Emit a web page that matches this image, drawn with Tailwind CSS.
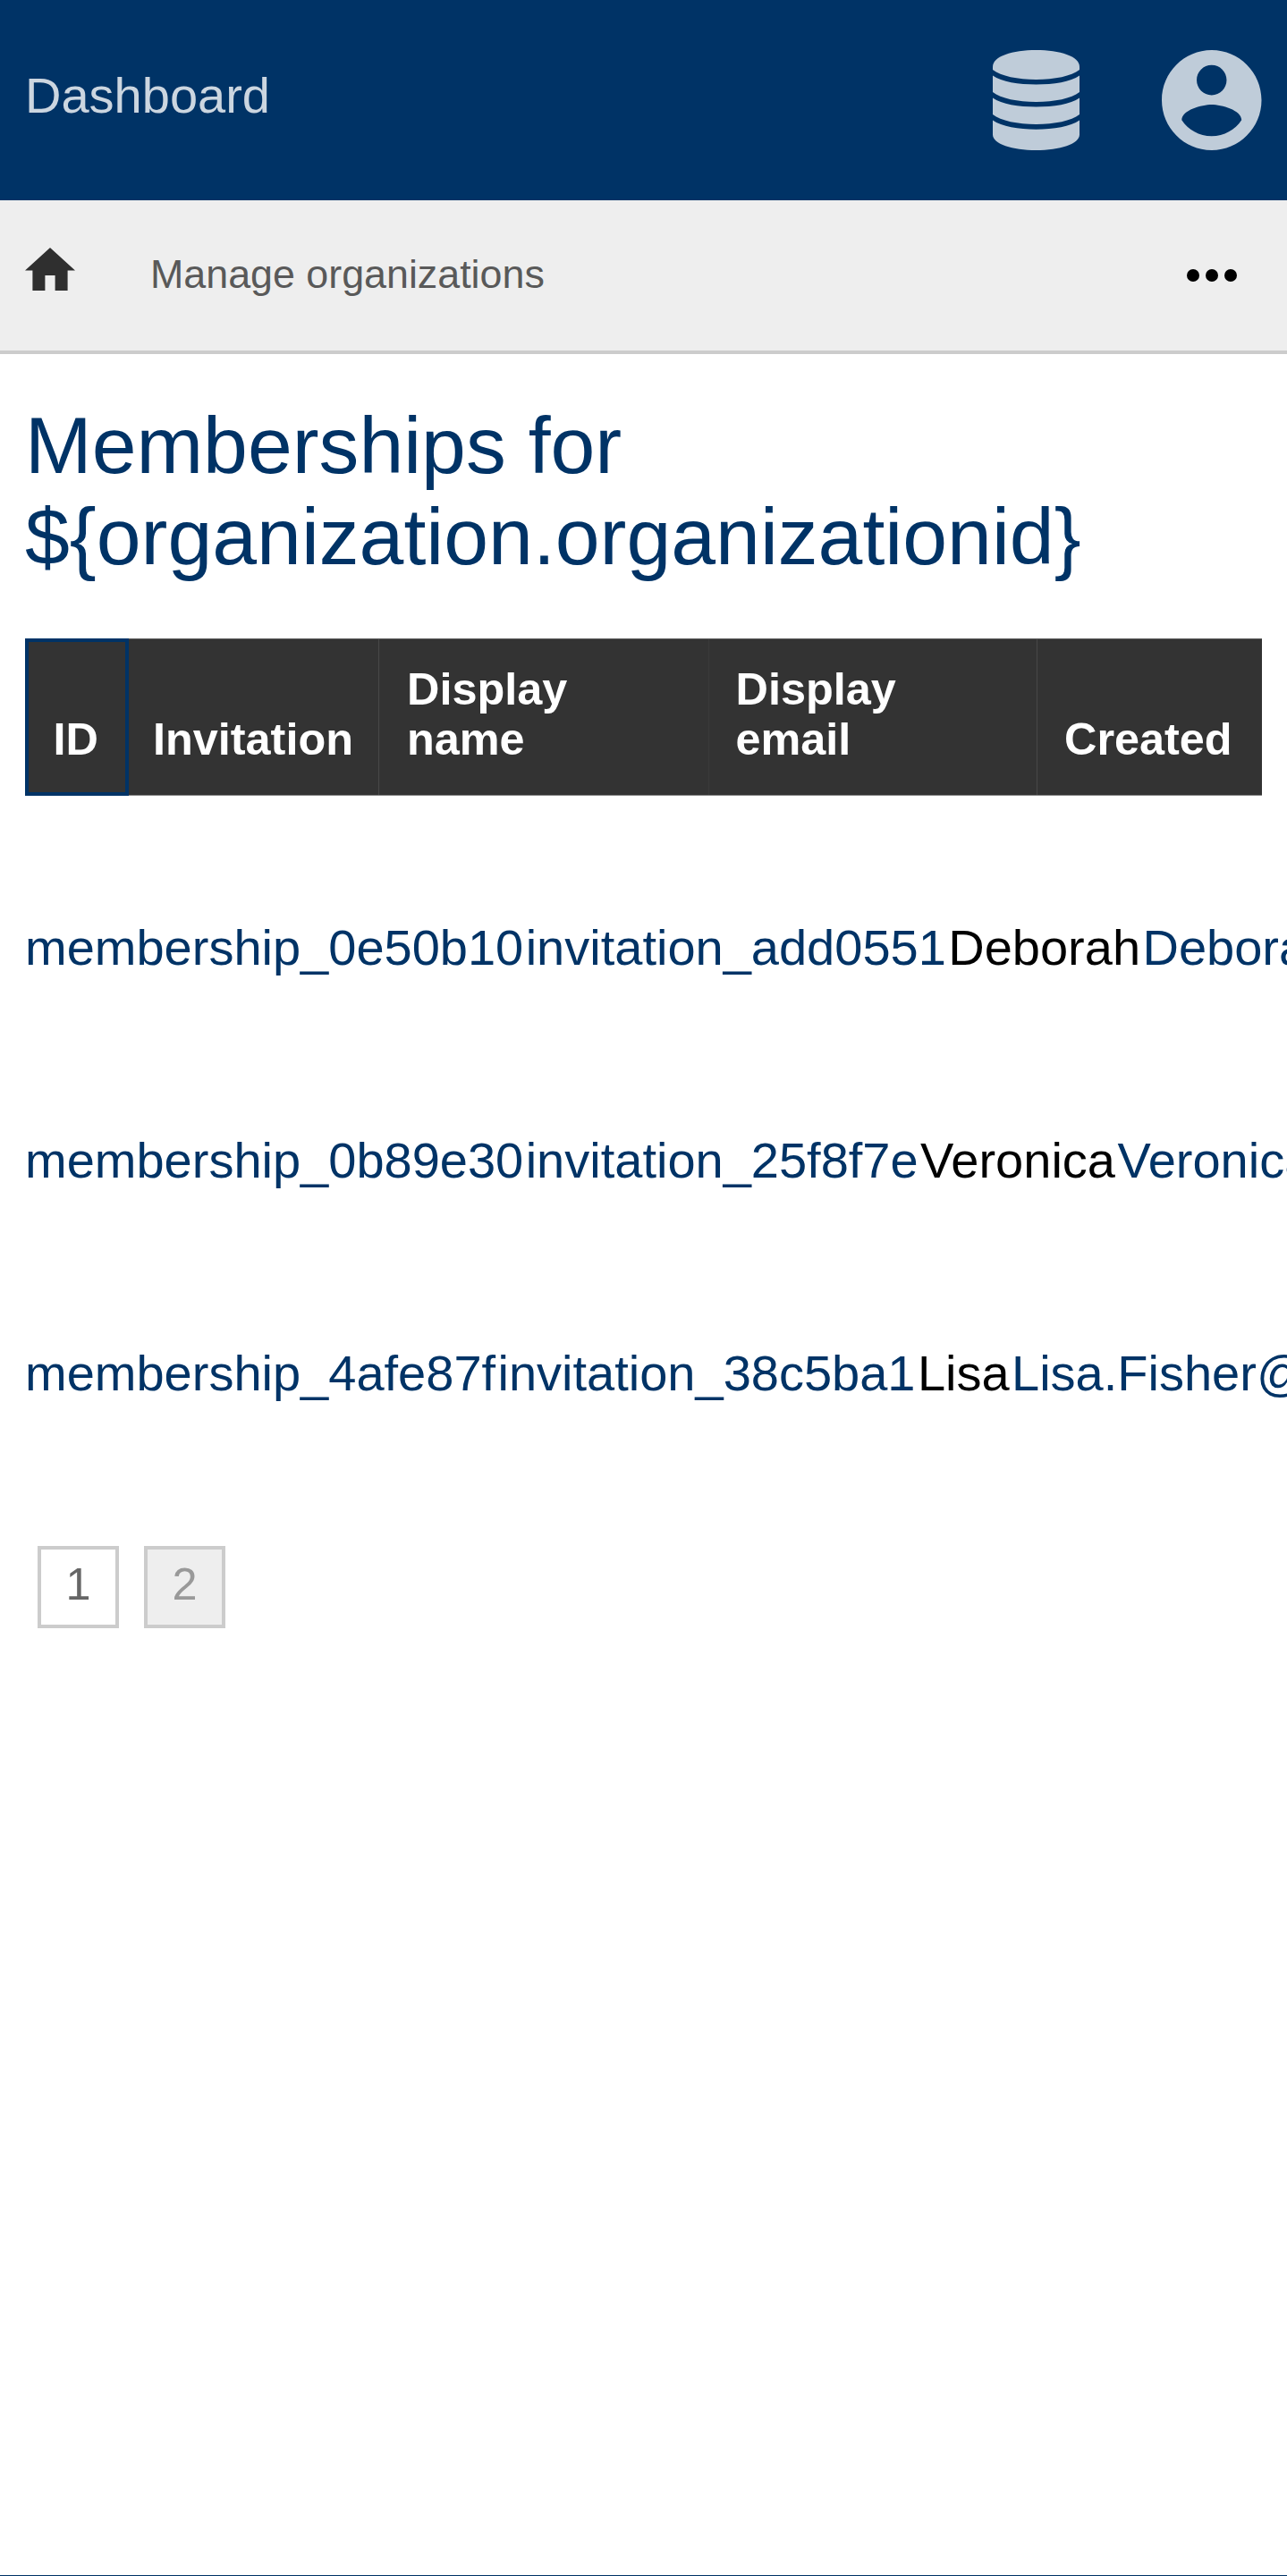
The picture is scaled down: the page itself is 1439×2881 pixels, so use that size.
<!DOCTYPE html>
<html lang="en">
<head>
<meta charset="utf-8">
<title>Memberships</title>
<script src="https://cdn.jsdelivr.net/npm/@tailwindcss/browser@4"></script>
</head>
<body class="flex h-[2881px] flex-col overflow-hidden bg-white font-['Liberation_Sans',Arial,sans-serif] text-[56px] text-black">
  <header class="flex h-56 shrink-0 items-center justify-between bg-[#003366] pr-[28.500px] pl-7">
    <a class="pb-[11px] leading-16 text-[#ccd6e0]">Dashboard</a>
    <div class="flex items-center gap-[92px] text-[#bfccd9]">
      <svg class="h-28 w-[97px]" viewBox="0 0 97 112" fill="currentColor">
        <path d="M0 18.500C0 7 22 0 48.500 0S97 7 97 18.500V22C88 29 69 33 48.500 33S9 29 0 22z"/>
        <path d="M0 28.500C10 35.500 29 38.500 48.500 38.500S87 35.500 97 28.500V47C88 54 69 58 48.500 58S9 54 0 47z"/>
        <path d="M0 53.500C10 60.500 29 63.500 48.500 63.500S87 60.500 97 53.500V72C88 79 69 83 48.500 83S9 79 0 72z"/>
        <path d="M0 78.500C10 85.500 29 88.700 48.500 88.700S87 85.500 97 78.500V94.500C97 105 75 112 48.500 112S0 105 0 94.500z"/>
      </svg>
      <svg class="h-28 w-[111.500px]" viewBox="2 2 20 20" preserveAspectRatio="none" fill="currentColor"><path d="M12 2C6.480 2 2 6.480 2 12s4.480 10 10 10 10-4.480 10-10S17.520 2 12 2zm0 3c1.660 0 3 1.340 3 3s-1.340 3-3 3-3-1.340-3-3 1.340-3 3-3zm0 14.200c-2.500 0-4.710-1.280-6-3.220.030-1.990 4-3.080 6-3.080 1.990 0 5.970 1.090 6 3.080-1.290 1.940-3.500 3.220-6 3.220z"/></svg>
    </div>
  </header>
  <nav class="flex h-[172px] shrink-0 items-center border-b-4 border-[#ccc] bg-[#eee] px-7">
    <svg class="mb-[14px] h-[48px] w-14" viewBox="2 3 20 17" preserveAspectRatio="none" fill="#2f2f2f"><path d="M10 20v-6h4v6h5v-8h3L12 3 2 12h3v8z"/></svg>
    <a class="ml-[84px] pb-[5px] text-[44.800px] leading-14 text-[#595959]">Manage organizations</a>
    <svg class="mr-7 ml-auto h-[14px] w-14" viewBox="0 0 56 14"><circle cx="7" cy="7" r="7"/><circle cx="28" cy="7" r="7"/><circle cx="49" cy="7" r="7"/></svg>
  </nav>
  <main class="flex grow flex-col overflow-hidden pt-[51px] pl-7">
    <h1 class="mb-[63px] text-[89.600px] leading-[102px] text-[#003366]">Memberships for<br>${organization.organizationid}</h1>
    <div class="grid h-44 w-[1383px] shrink-0 grid-cols-[116px_280px_369px_367px_251px] border-y border-t-[#5c5c5c] border-b-[#858585] bg-[#333] text-[50.400px] leading-14 font-bold text-white">
      <div class="-my-px flex items-end border-4 border-[#003366] pb-[31px] pl-[27.500px]">ID</div>
      <div class="flex items-end border-r border-[#484848] pb-[34px] pl-[27px]">Invitation</div>
      <div class="flex items-end border-r border-[#3a3a3a] pb-[34px] pl-[31px]">Display<br>name</div>
      <div class="flex items-end border-r border-[#484848] pb-[34px] pl-[29.500px]">Display<br>email</div>
      <div class="flex items-end pb-[34px] pl-[30px]">Created</div>
    </div>
    <div class="mt-[51px] whitespace-nowrap leading-[238px] text-[#003366]">
      <div class="flex gap-[2.400px]"><span>membership_0e50b10</span><span>invitation_add0551</span><span class="text-black">Deborah</span><span>Deborah.Hall@example.com</span></div>
      <div class="flex gap-[2.400px]"><span>membership_0b89e30</span><span>invitation_25f8f7e</span><span class="text-black">Veronica</span><span>Veronica.Mills@example.com</span></div>
      <div class="flex gap-[2.400px]"><span>membership_4afe87f</span><span>invitation_38c5ba1</span><span class="text-black">Lisa</span><span>Lisa.Fisher@example.com</span></div>
    </div>
    <div class="mt-[74px] ml-[14px] flex gap-7 text-center text-[50.400px] leading-[78px]">
      <span class="h-[92px] w-[91px] border-4 border-[#ccc] text-[#666]">1</span>
      <span class="h-[92px] w-[91px] border-4 border-[#ccc] bg-[#eee] text-[#999]">2</span>
    </div>
  </main>
  <footer class="h-px shrink-0 bg-[#003366]"></footer>
</body>
</html>
